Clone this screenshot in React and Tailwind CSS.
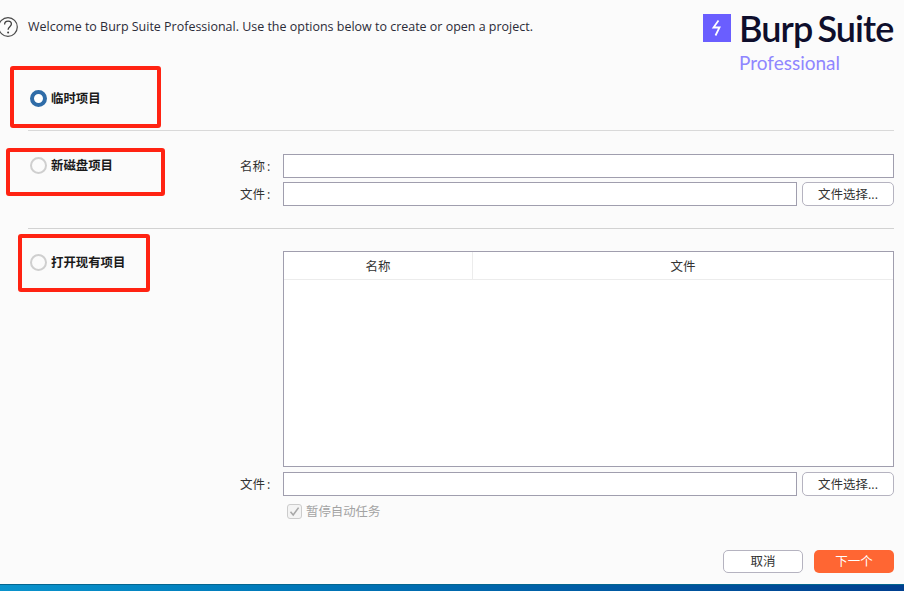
import React from "react";

const FONT = "font-['Open_Sans','Noto_Sans_CJK_SC',sans-serif]";

function Radio({ checked }) {
  if (checked) {
    return (
      <span className="w-[17px] h-[17px] rounded-full border-[4px] border-[#2f6ca8] bg-white shrink-0" />
    );
  }
  return <span className="w-[17px] h-[17px] rounded-full border-2 border-[#cfcfcf] bg-[#fbfbfb] shrink-0" />;
}

function RadioLabel({ checked, label }) {
  return (
    <div className="flex items-center gap-[4px] w-[240px] shrink-0 pl-[30px]">
      <Radio checked={checked} />
      <span className="text-[12.4px] leading-[17px] font-semibold text-[#1a1a1a]">{label}</span>
    </div>
  );
}

function Field({ label, button }) {
  return (
    <div className="flex items-center h-[24px]">
      <span className="w-[43px] pt-[2px] text-[12.5px] text-[#333333] shrink-0 whitespace-nowrap">
        {label}
        <span className="ml-[2px]">:</span>
      </span>
      <div className="flex-1 h-full bg-white border border-[#a09eae]" />
      {button && (
        <button className="ml-[5px] w-[92px] h-full pt-[2px] bg-white border border-[#b5b3c0] rounded-[5px] text-[12.5px] text-[#333333]">
          文件选择...
        </button>
      )}
    </div>
  );
}

function App() {
  return (
    <div className={`${FONT} relative w-[904px] h-[591px] overflow-hidden bg-[#fbfbfb] flex flex-col`}>
      {/* header */}
      <div className="flex h-[72px] shrink-0">
        <div className="flex items-start pt-[17px] flex-1 -ml-[2px]">
          <svg width="20" height="20" viewBox="0 0 20 20" className="shrink-0">
            <circle cx="10" cy="10" r="9.3" fill="none" stroke="#4a4a4a" strokeWidth="1.2" />
            <path d="M6.6 7.6c0-2.1 1.5-3.5 3.5-3.5s3.3 1.3 3.3 3c0 2.6-3.3 2.8-3.3 5.6" fill="none" stroke="#3d3d3d" strokeWidth="1.3" />
            <circle cx="10.1" cy="15.6" r="1" fill="#3d3d3d" />
          </svg>
          <span className="ml-[10px] text-[12.47px] leading-[20px] text-[#2b2b38] whitespace-nowrap">
            Welcome to Burp Suite Professional. Use the options below to create or open a project.
          </span>
        </div>
        <div className="w-[201px] shrink-0 pt-[14px]">
          <div className="flex items-center h-[28px]">
            <svg width="28" height="28" viewBox="0 0 28 28" className="shrink-0">
              <rect width="28" height="28" fill="#6a5eff" />
              <path d="M15.5 6.5 10.5 13.5h6L12.5 21.5" fill="none" stroke="#ffffff" strokeWidth="1.8" />
            </svg>
            <span className="ml-[8px] text-[36px] leading-[28px] font-semibold tracking-[-0.9px] [word-spacing:-3px] text-[#0e0e2c] whitespace-nowrap font-['Lato',sans-serif]">
              Burp Suite
            </span>
          </div>
          <div className="mt-[9px] ml-[36px] text-[19px] leading-[24px] text-[#8f86ff] whitespace-nowrap font-['Lato',sans-serif]">
            Professional
          </div>
        </div>
      </div>

      {/* temporary project */}
      <div className="h-[58px] shrink-0 pt-[18px]">
        <RadioLabel checked label="临时项目" />
      </div>
      <div className="ml-[28px] mr-[10px] h-px bg-[#d9d9d9] shrink-0" />

      {/* new project on disk */}
      <div className="h-[97px] shrink-0 flex pt-[23px]">
        <div className="pt-[3px]">
          <RadioLabel label="新磁盘项目" />
        </div>
        <div className="flex-1 mr-[10px] flex flex-col gap-[4px]">
          <Field label="名称" />
          <Field label="文件" button />
        </div>
      </div>
      <div className="ml-[28px] mr-[10px] h-px bg-[#d2d2d2] shrink-0" />

      {/* open existing project */}
      <div className="flex-1 flex pt-[22px]">
        <div className="pt-[3px]">
          <RadioLabel label="打开现有项目" />
        </div>
        <div className="flex-1 mr-[10px] flex flex-col">
          <div className="ml-[43px] h-[216px] bg-white border border-[#a09eae] flex flex-col shrink-0">
            <div className="flex h-[28px] border-b border-[#ececec] text-[12.5px] text-[#333333]">
              <div className="w-[189px] pt-[4px] border-r border-[#ececec] flex items-center justify-center">名称</div>
              <div className="flex-1 pt-[4px] flex items-center justify-center">文件</div>
            </div>
          </div>
          <div className="mt-[5px]">
            <Field label="文件" button />
          </div>
          <div className="mt-[7px] ml-[47px] flex items-center h-[17px]">
            <span className="w-[15px] h-[15px] rounded-[3px] border border-[#cccccc] bg-[#f4f4f4] flex items-center justify-center">
              <svg width="11" height="11" viewBox="0 0 11 11">
                <path d="M1.5 5.8 4.2 9 9.6 1.6" fill="none" stroke="#a8a8a8" strokeWidth="1.6" />
              </svg>
            </span>
            <span className="ml-[4px] pt-[1px] text-[12.4px] text-[#a3a3a3]">暂停自动任务</span>
          </div>
          <div className="mt-[30px] flex justify-end gap-[11px]">
            <button className="w-[80px] h-[23px] pt-px bg-white border border-[#b5b3c0] rounded-[5px] text-[12.5px] text-[#333333]">
              取消
            </button>
            <button className="w-[80px] h-[23px] pt-px bg-[#ff6633] rounded-[5px] text-[12.5px] text-white">下一个</button>
          </div>
        </div>
      </div>

      {/* window edge behind the dialog */}
      <div className="h-[7px] shrink-0 bg-gradient-to-r from-[#0a93cc] to-[#003f8f] border-t border-[#04668f]" />

      {/* red annotation boxes */}
      <div className="absolute left-[10px] top-[66px] w-[151px] h-[62px] border-[4px] border-[#ff2312] rounded-[3px]" />
      <div className="absolute left-[6px] top-[148px] w-[159px] h-[48px] border-[4px] border-[#ff2312] rounded-[3px]" />
      <div className="absolute left-[18px] top-[234px] w-[132px] h-[58px] border-[4px] border-[#ff2312] rounded-[3px]" />
    </div>
  );
}

export default App;
